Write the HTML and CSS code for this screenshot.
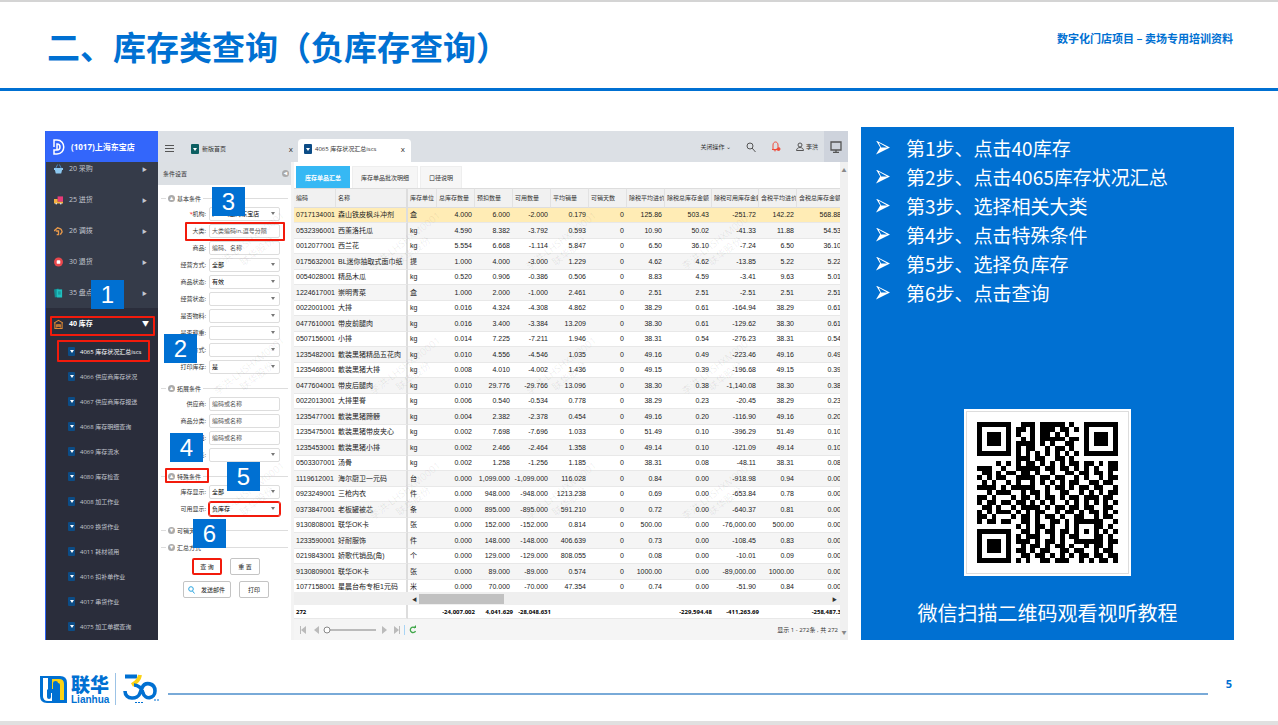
FILE: index.html
```html
<!DOCTYPE html>
<html lang="zh-CN">
<head>
    <meta charset="UTF-8">
    <meta name="viewport" content="width=device-width, initial-scale=1.0">
    <title>库存类查询（负库存查询）</title>
    <link rel="stylesheet" href="styles.css">
</head>
<body>
    <header class="header">
        <h1>二、库存类查询（负库存查询）</h1>
        <p class="project">数字化门店项目 – 卖场专用培训资料</p>
    </header>

    <main class="content">
        <section class="app">
            <aside class="sidebar">
                <div class="store">
                    <svg width="13" height="16" viewBox="0 0 13 16" fill="none" stroke="#fff" stroke-width="1.5"><path d="M1 8V1h3c9 0 9 14 0 14H1v-4h3c4 0 4-6 0-6v6"/></svg>
                    (1017)上海东宝店
                </div>
                <nav class="menu">
                    <a href="#"><svg viewBox="0 0 10 10"><path d="M0 4h10v2H0zM1 6h8l-1 4H2z" fill="#8cc8f0"/><path d="M2 4l2-4M8 4L6 0" stroke="#4b8fd0" fill="none"/></svg>20 采购<i>▶</i></a>
                    <a href="#"><svg viewBox="0 0 10 10"><path d="M4 1h6v6H4z" fill="#e83a78"/><path d="M0 4h4v3h6v2H0z" fill="#f5b041"/><circle cx="2.500" cy="9" r="1" fill="#ddd"/><circle cx="7.500" cy="9" r="1" fill="#ddd"/></svg>25 进货<i>▶</i></a>
                    <a href="#"><svg viewBox="0 0 10 10" fill="none" stroke="#e8994a" stroke-width="1.500"><path d="M0 5l4-3.500 4 1.500M8 3l1 3-2 3M2 5h3v4H3"/></svg>26 调拨<i>▶</i></a>
                    <a href="#"><svg viewBox="0 0 10 10"><circle cx="5" cy="5" r="5" fill="#e8474c"/><rect x="3" y="3" width="4" height="4" rx="1" fill="#fff"/></svg>30 退货<i>▶</i></a>
                    <a href="#"><svg viewBox="0 0 10 10"><path d="M0 1l5-1v9l-4 1z" fill="#128f94"/><path d="M3 1h6v9H3z" fill="#1fc0bf"/><path d="M4.500 4h3M4.500 6h3" stroke="#147c85"/></svg>35 盘点<i>▶</i></a>
                </nav>
                <nav class="submenu">
                    <a href="#" class="open"><svg viewBox="0 0 10 10" fill="none" stroke="#e08a35" stroke-width="1.200"><path d="M0 4l5-3 5 3M1 4v6h8V4M3 9V6h4v3M3 7.500h4"/></svg>40 库存<i>▼</i></a>
                    <a href="#" class="active"><b></b>4065 库存状况汇总iscs</a>
                    <a href="#"><b></b>4066 供应商库存状况</a>
                    <a href="#"><b></b>4067 供应商库存报送</a>
                    <a href="#"><b></b>4068 库存明细查询</a>
                    <a href="#"><b></b>4069 库存流水</a>
                    <a href="#"><b></b>4080 库存检查</a>
                    <a href="#"><b></b>4008 加工作业</a>
                    <a href="#"><b></b>4009 换货作业</a>
                    <a href="#"><b></b>4011 耗材领用</a>
                    <a href="#"><b></b>4016 扣补单作业</a>
                    <a href="#"><b></b>4017 串货作业</a>
                    <a href="#"><b></b>4075 加工单据查询</a>
                </nav>
            </aside>

            <div class="workspace">
                <div class="topbar">
                    <svg class="burger" width="9" height="9" viewBox="0 0 9 9" stroke="#555" stroke-width="1"><path d="M0 1.500h9M0 4.500h9M0 7.500h9"/></svg>
                    <a href="#" class="tab home"><b></b>新版首页<span>x</span></a>
                    <a href="#" class="tab current"><b></b>4065 库存状况汇总iscs<span>x</span></a>
                    <div class="tools">
                        <span>关闭操作 ⌄</span>
                        <svg width="10" height="10" viewBox="0 0 10 10" fill="none" stroke="#555"><circle cx="4" cy="4" r="3"/><path d="M6 6l3.500 4"/></svg>
                        <svg width="10" height="11" viewBox="0 0 10 11" fill="none" stroke="#f04a3a"><path d="M2 8V4c0-4 5-4 5 0v2M1 8.500h5M3 8.500c0 2 2 2 2 0"/><circle cx="7.500" cy="8" r="1.500" fill="#f04a3a"/></svg>
                        <span class="user"><svg width="8" height="9" viewBox="0 0 8 9" fill="none" stroke="#555"><circle cx="4" cy="3" r="2"/><path d="M.5 8.500c0-4 7-4 7 0z"/></svg>李洪</span>
                        <span class="screen"><svg width="12" height="12" viewBox="0 0 12 12" fill="none" stroke="#555" stroke-width="1.300"><path d="M1 1h10v8H1zM6 9v2M3 11.400h6"/></svg></span>
                    </div>
                </div>

                <div class="panes">
                    <form class="conditions">
                        <h2>条件设置 <b class="dot">◂</b></h2>
                        <div class="legend"><b class="dot">▴</b><span>基本条件</span></div>
                        <div class="field"><label for="org"><em>*</em>机构:</label><div class="select"><select id="org"><option>(1017)上海东宝店</option></select></div></div>
                        <div class="field"><label for="cat">大类:</label><input id="cat" type="text" placeholder="大类编码in,逗号分隔"></div>
                        <div class="field"><label for="goods">商品:</label><input id="goods" type="text" placeholder="编码、名称"></div>
                        <div class="field"><label for="mode">经营方式:</label><div class="select"><select id="mode"><option>全部</option></select></div></div>
                        <div class="field"><label for="state">商品状态:</label><div class="select"><select id="state"><option>有效</option></select></div></div>
                        <div class="field"><label for="run">经营状态:</label><div class="select"><select id="run"><option></option></select></div></div>
                        <div class="field"><label for="material">是否物料:</label><div class="select"><select id="material"><option></option></select></div></div>
                        <div class="field"><label for="weigh">是否称重:</label><div class="select"><select id="weigh"><option></option></select></div></div>
                        <div class="field"><label for="way">配送方式:</label><div class="select"><select id="way"><option></option></select></div></div>
                        <div class="field"><label for="print">打印库存:</label><div class="select"><select id="print"><option>是</option></select></div></div>

                        <div class="legend"><b class="dot">▴</b><span>拓展条件</span></div>
                        <div class="field"><label for="supplier">供应商:</label><input id="supplier" type="text" placeholder="编码或名称"></div>
                        <div class="field"><label for="class">商品分类:</label><input id="class" type="text" placeholder="编码或名称"></div>
                        <div class="field"><label for="group">商品组:</label><input id="group" type="text" placeholder="编码或名称"></div>
                        <div class="field"><label for="label">标签:</label><div class="select"><select id="label"><option></option></select></div></div>

                        <div class="legend"><b class="dot">▴</b><span>特殊条件</span></div>
                        <div class="field"><label for="stock">库存显示:</label><div class="select"><select id="stock"><option>全部</option></select></div></div>
                        <div class="field"><label for="usable">可用显示:</label><div class="select marked"><select id="usable"><option>负库存</option></select></div></div>

                        <div class="legend"><b class="dot">▾</b><span>可销天数</span></div>
                        <div class="legend close"><b class="dot">▾</b><span>汇总方式</span></div>
                        <div class="buttons">
                            <button type="button" class="marked">查 询</button>
                            <button type="button">重 置</button>
                        </div>
                        <div class="buttons wide">
                            <button type="button"><svg width="7" height="8" viewBox="0 0 7 8" fill="none" stroke="#2aa5e0"><circle cx="3" cy="3" r="2.300"/><path d="M4.500 5L6.500 7.500"/></svg>发送邮件</button>
                            <button type="button">打印</button>
                        </div>
                    </form>

                    <div class="report">
                        <div class="views">
                            <button type="button" class="on">库存单品汇总</button>
                            <button type="button">库存单品批次明细</button>
                            <button type="button">口径说明</button>
                        </div>
                        <div class="grid">
                            <table>
                                <colgroup><col class="code"><col class="name"><col class="unit"><col span="6"><col class="sum" span="2"><col><col class="last"></colgroup>
                                <thead>
                                    <tr><th>编码</th><th>名称</th><th>库存单位</th><th>总库存数量</th><th>预扣数量</th><th>可用数量</th><th>平均销量</th><th>可销天数</th><th>除税平均进价</th><th>除税总库存金额</th><th>除税可用库存金额</th><th>含税平均进价</th><th>含税总库存金额</th></tr>
                                </thead>
                                <tbody id="rows"></tbody>
                            </table>
                        </div>
                        <div class="scroll"><span>◀</span><b></b><span class="end">▶</span></div>
                        <table class="totals">
                            <colgroup><col class="code"><col class="name"><col class="unit"><col span="6"><col class="sum" span="2"><col><col class="last"></colgroup>
                            <tbody><tr><td>272</td><td></td><td></td><td>-24,007.002</td><td>4,041.629</td><td>-28,048.631</td><td></td><td></td><td></td><td>-229,594.48</td><td>-411,263.69</td><td></td><td>-258,487.3</td></tr></tbody>
                        </table>
                        <div class="pager">
                            <svg width="120" height="12" viewBox="0 0 120 12"><g fill="#bbb"><path d="M1 2h1v8H1zM7 2v8L2 6zM20 2v8l-5-4zM83 2v8l5-4zM95 2v8l5-4zM100 2h1v8h-1z"/><path d="M29 5h48v2H29z"/></g><circle cx="28" cy="6" r="3" fill="#fff" stroke="#888"/><path d="M105.500 1v10" stroke="#a8d4f5"/><path d="M116 4a2.700 2.700 0 1 0 .5 3" fill="none" stroke="#3fa648" stroke-width="1.300"/><path d="M114 4h3V1z" fill="#3fa648"/></svg>
                            <span>显示 1 - 272条 , 共 272</span>
                        </div>
                    </div>
                    <div class="rail"><span>▲</span><span>▼</span></div>
                </div>
            </div>

            <div class="watermarks" id="watermarks"></div>
            <div class="frame frame-menu"></div>
            <div class="frame frame-item"></div>
            <div class="frame frame-category"></div>
            <div class="frame frame-special"></div>
            <span class="badge badge-1">1</span>
            <span class="badge badge-2">2</span>
            <span class="badge badge-3">3</span>
            <span class="badge badge-4">4</span>
            <span class="badge badge-5">5</span>
            <span class="badge badge-6">6</span>
        </section>

        <section class="guide">
            <ul>
                <li>第1步、点击40库存</li>
                <li>第2步、点击4065库存状况汇总</li>
                <li>第3步、选择相关大类</li>
                <li>第4步、点击特殊条件</li>
                <li>第5步、选择负库存</li>
                <li>第6步、点击查询</li>
            </ul>
            <div class="qr"><svg viewBox="0 0 29 29" shape-rendering="crispEdges"><path id="qr"/></svg></div>
            <p>微信扫描二维码观看视听教程</p>
        </section>
    </main>

    <footer class="footer">
        <svg class="mark" width="27" height="27" viewBox="0 0 27 27">
            <path d="M0 0h20q7 0 7 7v20H7q-7 0-7-7z" fill="#0070d2"/>
            <path d="M3 2h4v20q0 2 2 2h1q-7 1-7-6z" fill="#fff"/>
            <path d="M12 3h7q5 0 5 5v16h-4V9q0-2-2-2t-2 2v4h-4z" fill="#fcd214"/>
            <path d="M3 2h5v13h4v10H8q-5 0-5-5z" fill="#fff"/>
            <path d="M8 2h3v12h2V7q0-2 2.500-2T18 7v13q0 3-2 5h-3v-8h-2v4q0 2-2 2t-2-2v-7l1-1z" fill="#0070d2"/>
        </svg>
        <div class="brand"><strong>联华</strong><span>Lianhua</span></div>
        <svg class="years" width="36" height="30" viewBox="0 0 36 30" fill="none" stroke-width="4">
            <path d="M2 2.500h12" stroke="#0070d2"/>
            <path d="M17 1q-1 6-8 10" stroke="#fcd214"/>
            <path d="M2 17c0 9 13 9 15 2l2-5c3-7 13-5 13 3s-10 9-12 2c-1-5-5-8-9-8" stroke="#0070d2" stroke-width="3.600"/>
            <path d="M12 28.500h9M31 26h5" stroke="#0070d2" stroke-width="1" stroke-dasharray="2 1"/>
        </svg>
        <div class="rule"></div>
        <span class="page">5</span>
    </footer>

    <script>
        var rows = [
            '0717134001|森山铁皮枫斗冲剂|盒|4.000|6.000|-2.000|0.179|0|125.86|503.43|-251.72|142.22|568.88',
            '0532396001|西薰洛托瓜|kg|4.590|8.382|-3.792|0.593|0|10.90|50.02|-41.33|11.88|54.53',
            '0012077001|西兰花|kg|5.554|6.668|-1.114|5.847|0|6.50|36.10|-7.24|6.50|36.10',
            '0175632001|BL迷你抽取式面巾纸|提|1.000|4.000|-3.000|1.229|0|4.62|4.62|-13.85|5.22|5.22',
            '0054028001|精品木瓜|kg|0.520|0.906|-0.386|0.506|0|8.83|4.59|-3.41|9.63|5.01',
            '1224617001|崇明青菜|盒|1.000|2.000|-1.000|2.461|0|2.51|2.51|-2.51|2.51|2.51',
            '0022001001|大排|kg|0.016|4.324|-4.308|4.862|0|38.29|0.61|-164.94|38.29|0.61',
            '0477610001|带皮前腿肉|kg|0.016|3.400|-3.384|13.209|0|38.30|0.61|-129.62|38.30|0.61',
            '0507156001|小排|kg|0.014|7.225|-7.211|1.946|0|38.31|0.54|-276.23|38.31|0.54',
            '1235482001|散装黑猪精品五花肉|kg|0.010|4.556|-4.546|1.035|0|49.16|0.49|-223.46|49.16|0.49',
            '1235468001|散装黑猪大排|kg|0.008|4.010|-4.002|1.436|0|49.15|0.39|-196.68|49.15|0.39',
            '0477604001|带皮后腿肉|kg|0.010|29.776|-29.766|13.096|0|38.30|0.38|-1,140.08|38.30|0.38',
            '0022013001|大排里脊|kg|0.006|0.540|-0.534|0.778|0|38.29|0.23|-20.45|38.29|0.23',
            '1235477001|散装黑猪蹄髈|kg|0.004|2.382|-2.378|0.454|0|49.16|0.20|-116.90|49.16|0.20',
            '1235475001|散装黑猪带皮夹心|kg|0.002|7.698|-7.696|1.033|0|51.49|0.10|-396.29|51.49|0.10',
            '1235453001|散装黑猪小排|kg|0.002|2.466|-2.464|1.358|0|49.14|0.10|-121.09|49.14|0.10',
            '0503307001|汤骨|kg|0.002|1.258|-1.256|1.185|0|38.31|0.08|-48.11|38.31|0.08',
            '1119612001|海尔厨卫一元码|台|0.000|1,099.000|-1,099.000|116.028|0|0.84|0.00|-918.98|0.94|0.00',
            '0923249001|三枪内衣|件|0.000|948.000|-948.000|1213.238|0|0.69|0.00|-653.84|0.78|0.00',
            '0373847001|老板罐被芯|条|0.000|895.000|-895.000|591.210|0|0.72|0.00|-640.37|0.81|0.00',
            '9130808001|联华OK卡|张|0.000|152.000|-152.000|0.814|0|500.00|0.00|-76,000.00|500.00|0.00',
            '1233590001|好耐服饰|件|0.000|148.000|-148.000|406.639|0|0.73|0.00|-108.45|0.83|0.00',
            '0219843001|娇歌代销品(角)|个|0.000|129.000|-129.000|808.055|0|0.08|0.00|-10.01|0.09|0.00',
            '9130809001|联华OK卡|张|0.000|89.000|-89.000|0.574|0|1000.00|0.00|-89,000.00|1000.00|0.00',
            '1077158001|星晨台布专柜1元码|米|0.000|70.000|-70.000|47.354|0|0.74|0.00|-51.90|0.84|0.00'
        ];
        document.getElementById('rows').innerHTML = rows.map(row => '<tr><td>' + row.split('|').join('</td><td>') + '</td></tr>').join('');

        document.getElementById('watermarks').innerHTML = '<span>李洪-LHSHXM0001<br>联华股份</span>'.repeat(12);

        var modules = [
            '#######..###.#####.#..#######',
            '#.....#.##.#.###.##.#.#.....#',
            '#.###.#.#..#.##.#.#...#.###.#',
            '#.###.#..#.#.#####.##.#.###.#',
            '#.###.#.####.#.#..##..#.###.#',
            '#.....#.#.##..#.##.#..#.....#',
            '#######.#.#.#.#.#.#.#.#######',
            '........###.##..##.#.........',
            '....#.#.#.##.#.#.#.##.##.#.##',
            '###..#..#####.##.##.#.#.#..##',
            '.##.#.##.##.#..#..##.##.##.#.',
            '#.#.##..####.##.##..#.#..#.##',
            '.#.#..#.#..#.#.#.#.##..##.##.',
            '####.#.#####..#.##.#.##.##..#',
            '..#.###..#.##.#..##..#.#.#.##',
            '##.#...#.##.#.##.#.##.###.##.',
            '#.##.##.##.#.#.#..#.#.#.#.#.#',
            '.##.#..#.####.#.##.##.##..##.',
            '#.#.###.#.#.##..#.##.#.##.#.#',
            '##.#...#.##.#.##.#..##..#.##.',
            '#.##.##..##.#..##.#.######..#',
            '........#.#.##.#..#.#...##.#.',
            '#######..##.#.##.##.#.#.#.#.#',
            '#.....#.#.###..#.#.##...##.#.',
            '#.###.#.###.#.##.#..######.##',
            '#.###.#..#.##.#.##.#..#.##.#.',
            '#.###.#.##.#.##..##.##..#.##.',
            '#.....#..##.##.#.#.#.##.##.##',
            '#######.#.#..##.###..#.#.##.#'
        ];
        var path = '';
        modules.forEach((line, y) => [...line].forEach((cell, x) => {
            if (cell === '#') path += 'M' + x + ' ' + y + 'h1v1h-1z';
        }));
        document.getElementById('qr').setAttribute('d', path);
    </script>
</body>
</html>
```
FILE: styles.css
```css
/* General Styles */
* {
    box-sizing: border-box;
}
body {
    margin: 0;
    min-height: 100vh;
    display: flex;
    flex-direction: column;
    background-color: #fff;
    color: #333;
    font-family: "Open Sans", "Noto Sans CJK SC", sans-serif;
    border-top: 2px solid #d4d4d4;
    border-bottom: 4px solid #e0e0e0;
}
h1, h2, p, ul {
    margin: 0;
    padding: 0;
}
a {
    color: inherit;
    text-decoration: none;
}
svg {
    flex: none;
}

/* Header Styles */
.header {
    display: flex;
    justify-content: space-between;
    height: 89px;
    padding: 20px 45px 0 47px;
    border-bottom: 3px solid #0070d2;
    color: #0070d2;
    font-family: "Noto Sans CJK SC", sans-serif;
}
h1 {
    font-size: 33px;
    line-height: 48px;
}
.project {
    padding-top: 6px;
    font-size: 11px;
    line-height: 20px;
    font-weight: bold;
}

/* Content Styles */
.content {
    display: grid;
    grid-template-columns: minmax(0, 803fr) minmax(0, 373fr);
    gap: 13px;
    padding: 36px 44px 0 45px;
}
.app {
    position: relative;
    display: flex;
    margin-top: 4px;
    font-size: 6px;
    line-height: 10px;
}

/* Sidebar Styles */
.sidebar {
    flex: none;
    width: 113px;
    background-color: #353b49;
    color: #c3c7d0;
    border-left: 1px solid #2d63f3;
}
.store {
    display: flex;
    align-items: center;
    gap: 5px;
    height: 31px;
    padding-left: 7px;
    background-color: #3366fb;
    color: #fff;
    font-size: 8px;
    font-weight: bold;
}
.menu {
    display: flex;
    flex-direction: column;
    justify-content: flex-end;
    height: 146px;
    overflow: hidden;
}
.menu a, .open {
    display: flex;
    flex: none;
    align-items: center;
    height: 31px;
    padding: 0 11px 0 8px;
    font-size: 7px;
}
.menu svg, .open svg {
    width: 9px;
    height: 10px;
    margin-right: 6px;
}
.menu i, .open i {
    margin-left: auto;
    font-size: 5px;
    font-style: normal;
}
.submenu {
    background-color: #2a2d3b;
}
.submenu a {
    display: flex;
    align-items: center;
    height: 25px;
    padding: 0 0 2px 22px;
}
.submenu .open {
    height: 32px;
    padding: 0 9px 0 8px;
    color: #fff;
    font-weight: bold;
}
.submenu .open i {
    font-size: 7px;
}
.submenu .active {
    color: #fff;
}
.submenu b, .tab b {
    display: flex;
    align-items: center;
    justify-content: center;
    width: 7px;
    height: 9px;
    margin-right: 5px;
    border-radius: 1px;
    background-color: #0c4c86;
}
.submenu b::after, .tab b::after {
    content: "";
    border: 2px solid transparent;
    border-top: 3px solid #fff;
    border-bottom: 0;
}

/* Top Bar Styles */
.workspace {
    flex: 1;
    min-width: 0;
    display: flex;
    flex-direction: column;
}
.topbar {
    display: flex;
    align-items: flex-end;
    height: 31px;
    background-color: #dce0e5;
}
.burger {
    margin: 0 17px 9px 7px;
}
.tab {
    display: flex;
    align-items: center;
    height: 23px;
    padding-bottom: 3px;
}
.tab b {
    width: 8px;
    height: 10px;
    margin-right: 3px;
}
.home b {
    background-color: #0c5f62;
}
.tab span {
    margin-left: auto;
    font-size: 8px;
}
.home {
    width: 102px;
    margin-right: 5px;
}
.current {
    width: 113px;
    padding: 0 6px 3px;
    border-radius: 4px 4px 0 0;
    background-color: #fff;
}
.tools {
    display: flex;
    align-items: center;
    gap: 15px;
    height: 31px;
    margin-left: auto;
}
.user {
    display: flex;
    align-items: center;
    gap: 2px;
}
.screen {
    display: flex;
    align-items: center;
    justify-content: center;
    width: 24px;
    height: 31px;
    margin-left: -9px;
    background-color: #ced3dc;
}
.panes {
    flex: 1;
    display: flex;
    min-height: 0;
}

/* Condition Styles */
.conditions {
    flex: none;
    width: 136px;
    border-right: 3px solid #f3f3f3;
}
.conditions h2 {
    display: flex;
    align-items: center;
    justify-content: space-between;
    height: 23px;
    margin-bottom: 7px;
    padding: 0 2px 0 5px;
    background-color: #dce0e4;
    font-size: 6px;
    font-weight: normal;
}
.dot {
    width: 7px;
    height: 7px;
    border-radius: 50%;
    background-color: #aaa;
    color: #fff;
    font-size: 6px;
    line-height: 6px;
    text-align: center;
}
.legend {
    display: flex;
    align-items: center;
    gap: 2px;
    height: 13px;
    margin: 0 3px;
}
.legend::before {
    content: "";
    width: 5px;
    border-top: 1px solid #ddd;
}
.legend::after {
    content: "";
    flex: 1;
    border-top: 1px solid #ddd;
}
.field + .legend {
    margin-top: 7px;
}
.legend.close {
    margin-top: 4px;
}
.field {
    display: flex;
    align-items: center;
    gap: 3px;
    height: 17px;
}
.field label {
    width: 48px;
    text-align: right;
}
.field em {
    color: #f00;
}
.field input, .select {
    width: 71px;
    height: 14px;
    padding: 0 2px;
    border: 1px solid #ddd;
    border-radius: 2px;
    background-color: #fff;
    font: inherit;
}
.field input::placeholder {
    color: #555;
}
.select {
    display: flex;
    align-items: center;
}
.select select {
    flex: 1;
    min-width: 0;
    height: 12px;
    padding: 0;
    border: 0;
    appearance: none;
    background: none;
    color: #000;
    font: inherit;
}
.select::after {
    content: "";
    margin-right: 2px;
    border: 2px solid transparent;
    border-top: 3px solid #777;
    border-bottom: 0;
}
.field .marked {
    outline: 1px solid #f21b0c;
    border-color: #f21b0c;
}
.buttons {
    display: flex;
    gap: 8px;
    height: 17px;
    margin: 4px 0 6px 34px;
}
.buttons button {
    width: 30px;
    padding: 0;
    border: 1px solid #c4c4c4;
    border-radius: 2px;
    background-color: #fff;
    color: #222;
    font: inherit;
}
.buttons .marked {
    border: 2px solid #f21b0c;
}
.wide {
    margin-left: 25px;
}
.wide button:first-child {
    display: flex;
    align-items: center;
    gap: 6px;
    width: 48px;
    padding: 0 4px;
}

/* Report Styles */
.report {
    flex: 1;
    min-width: 0;
    display: flex;
    flex-direction: column;
    overflow: hidden;
    background-color: #fff;
}
.views {
    display: flex;
    gap: 2px;
    height: 26px;
    padding: 4px 2px 0;
}
.views button {
    padding: 0 8px;
    border: 1px solid #eee;
    border-bottom: 0;
    background-color: #f6f6f6;
    color: #333;
    font: inherit;
}
.views .on {
    border-color: #36b8f4;
    background-color: #36b8f4;
    color: #fff;
    font-weight: bold;
}
.grid {
    flex: 1 1 0;
    overflow: hidden;
}
table {
    width: 100%;
    table-layout: fixed;
    border-collapse: separate;
    border-spacing: 0;
    white-space: nowrap;
}
col {
    width: 38px;
}
.code {
    width: 42px;
}
.name {
    width: 72px;
}
.unit {
    width: 29px;
}
.sum {
    width: 47px;
}
.last {
    width: 44px;
}
th {
    height: 20px;
    padding: 0 0 0 2px;
    overflow: hidden;
    border-top: 1px solid #ddd;
    border-right: 1px solid #e2e2e2;
    border-bottom: 1px solid #ddd;
    background-color: #f1f1f1;
    font-weight: normal;
    text-align: left;
}
td {
    height: 15px;
    padding: 0 3px 0 0;
    border-bottom: 1px solid #e8e8e8;
    color: #222;
    font-family: "Liberation Sans", "Noto Sans CJK SC", sans-serif;
    font-size: 7px;
    text-align: right;
}
td:nth-child(-n+3) {
    padding: 0 0 0 2px;
    text-align: left;
}
td:nth-child(2), th:nth-child(2) {
    border-right: 2px solid #ddd;
}
td:last-child {
    padding-right: 0;
}
tr:nth-child(even) td {
    height: 16px;
}
#rows tr:nth-child(even) td {
    background-color: #f5f5f5;
}
#rows tr:first-child td {
    background-color: #ffecb5;
}
.scroll {
    display: flex;
    align-items: center;
    height: 13px;
    padding: 0 3px 0 118px;
    background-color: #efefef;
    font-size: 5px;
}
.scroll b {
    width: 85px;
    height: 10px;
    margin-left: 2px;
    background-color: #c1c1c1;
}
.scroll .end {
    margin-left: auto;
}
.totals td {
    height: 14px;
    padding-right: 0;
    color: #000;
    font-family: "Open Sans", sans-serif;
    font-size: 6px;
    font-weight: bold;
}
.pager {
    display: flex;
    align-items: center;
    justify-content: space-between;
    height: 21px;
    padding: 0 2px 0 5px;
    background-color: #f5f5f5;
}
.rail {
    display: flex;
    flex: none;
    flex-direction: column;
    justify-content: space-between;
    width: 8px;
    padding: 3px 0;
    background-color: #f0f0f0;
    color: #888;
    font-size: 5px;
    text-align: center;
}

/* Annotation Styles */
.watermarks {
    position: absolute;
    top: 52px;
    left: 130px;
    display: grid;
    grid-template-columns: repeat(4, 156px);
    grid-auto-rows: 125px;
    place-items: center;
    color: rgba(0, 0, 0, 0.08);
    font-size: 10px;
    line-height: 13px;
    text-align: center;
    pointer-events: none;
}
.watermarks span {
    transform: rotate(-38deg);
}
.frame {
    position: absolute;
    border: 2px solid #f21b0c;
    border-radius: 1px;
}
.frame-menu {
    top: 185px;
    left: 5px;
    width: 105px;
    height: 20px;
}
.frame-item {
    top: 209px;
    left: 12px;
    width: 93px;
    height: 22px;
}
.frame-category {
    top: 91px;
    left: 140px;
    width: 100px;
    height: 19px;
}
.frame-special {
    top: 337px;
    left: 120px;
    width: 44px;
    height: 15px;
}
.badge {
    position: absolute;
    width: 33px;
    height: 29px;
    background-color: #0070d2;
    color: #fff;
    font-family: "Liberation Sans", sans-serif;
    font-size: 24px;
    line-height: 29px;
    text-align: center;
}
.badge-1 {
    top: 149px;
    left: 46px;
}
.badge-2 {
    top: 203px;
    left: 119px;
}
.badge-3 {
    top: 56px;
    left: 167px;
}
.badge-4 {
    top: 302px;
    left: 125px;
}
.badge-5 {
    top: 331px;
    left: 182px;
}
.badge-6 {
    top: 388px;
    left: 148px;
}

/* Guide Styles */
.guide {
    display: flex;
    flex-direction: column;
    align-items: center;
    padding: 6px 15px 13px;
    background-color: #0070d2;
    color: #fff;
    font-family: "Noto Sans CJK SC", sans-serif;
}
.guide ul {
    align-self: stretch;
    list-style: none;
    font-size: 19px;
    line-height: 29px;
}
.guide li {
    display: flex;
    align-items: center;
    gap: 16px;
}
.guide li::before {
    content: "";
    width: 14px;
    height: 14px;
    background-color: #fff;
    clip-path: polygon(0 0, 100% 50%, 0 100%, 30% 50%, 80% 50%, 20% 16%, 36% 50%, 30% 50%);
}
.qr {
    width: 167px;
    height: 167px;
    margin: auto 0 23px;
    padding: 12px;
    border: 1px solid #fff;
    outline: 1px solid #ddd;
    outline-offset: -3px;
    background-color: #fff;
}
.qr svg {
    display: block;
}
.guide p {
    font-size: 20px;
    line-height: 28px;
}

/* Footer Styles */
.footer {
    display: flex;
    align-items: center;
    margin-top: auto;
    padding: 0 46px 16px 40px;
    color: #0070d2;
}
.brand {
    display: flex;
    flex-direction: column;
    margin-left: 4px;
    padding-right: 6px;
    border-right: 1px solid #9cc3e6;
    font-family: "Noto Sans CJK SC", sans-serif;
}
.brand strong {
    font-size: 19px;
    line-height: 21px;
    font-weight: 900;
}
.brand span {
    font-family: "Liberation Sans", sans-serif;
    font-size: 10px;
    line-height: 11px;
    font-weight: bold;
}
.years {
    margin: 0 9px 0 7px;
}
.rule {
    flex: 1;
    margin-top: 10px;
    border-top: 2px solid #79aad8;
}
.page {
    margin: 0 0 11px 18px;
    font-size: 11px;
    font-weight: bold;
}
```
